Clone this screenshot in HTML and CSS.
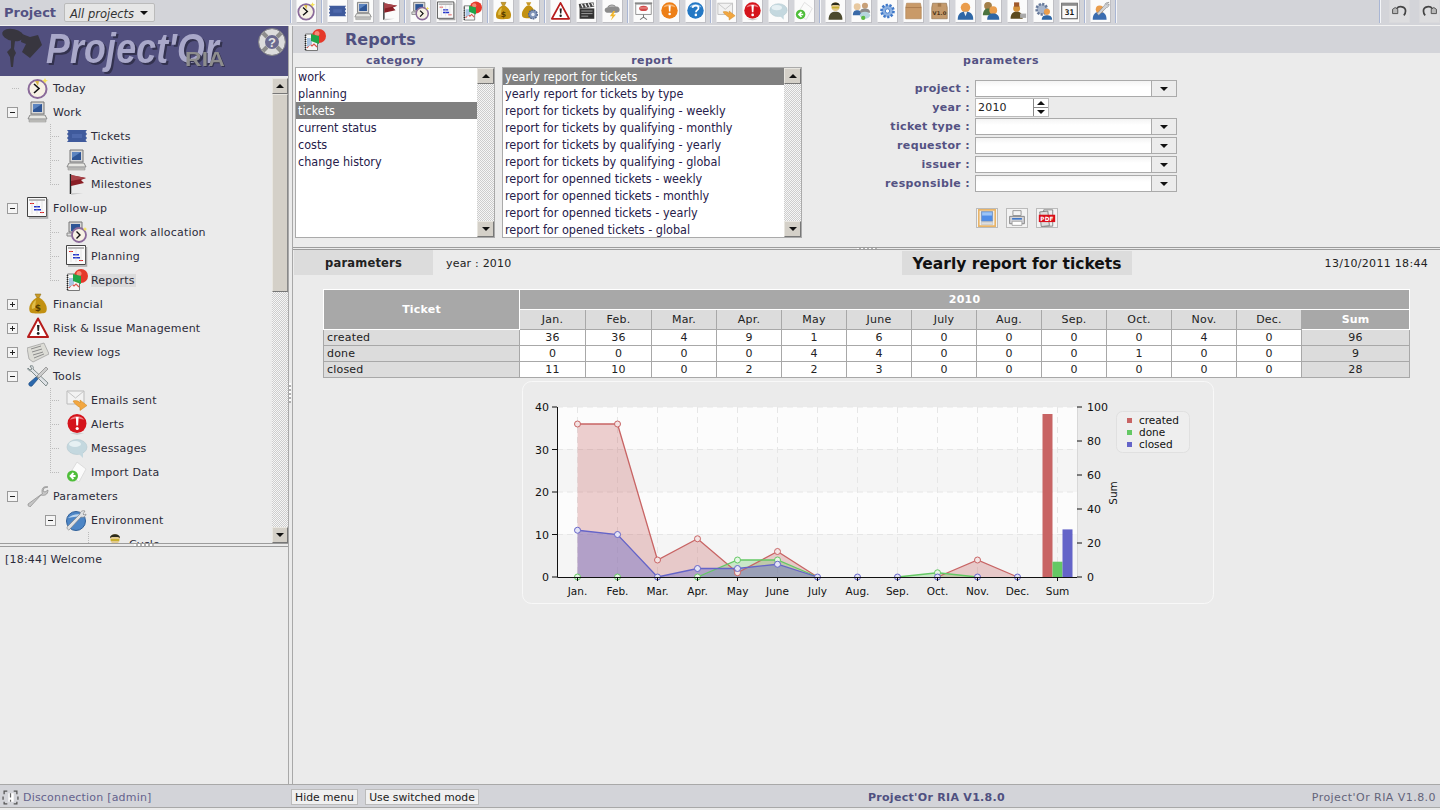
FILE: index.html
```html
<!DOCTYPE html>
<html lang="en">
<head>
<meta charset="utf-8">
<title>Project'Or RIA</title>
<link rel="stylesheet" href="styles.css">
</head>
<body>
<svg class="defs" width="0" height="0" aria-hidden="true">
<defs>
<symbol id="i-today" viewBox="0 0 22 22"><circle cx="10.5" cy="12" r="9" fill="#f6f1e4" stroke="#8a6a9a" stroke-width="2"/><path d="M7 7l5 4.5-5 4.5" fill="none" stroke="#111" stroke-width="1.6"/><path d="M8 4l3 5 1-5z" fill="#d8b84a"/><path d="M18 1l1 2 2 .5-2 1-1 2-1-2-2-1 2-.5z" fill="#f5e25a"/></symbol>
<symbol id="i-ticket" viewBox="0 0 22 22"><path d="M1 5h20l-1.500 2 1.500 2-1.500 2 1.500 2-1.500 2 1.500 2H1l1.500-2L1 13l1.500-2L1 9l1.500-2z" fill="#3f5a9c"/><path d="M6 9h10v4H6z" fill="#4d68ab"/></symbol>
<symbol id="i-activity" viewBox="0 0 22 22"><path d="M4 1h13v12H4z" fill="#d8d8d8" stroke="#777"/><path d="M6 3h9v8H6z" fill="#2e5596"/><path d="M6 3h9l-9 6z" fill="#5c84c0"/><path d="M3 14h15l2 4H1z" fill="#e6e6e2" stroke="#888"/><path d="M2 19h17v2H2z" fill="#c8c8c4" stroke="#888" stroke-width=".5"/></symbol>
<symbol id="i-flag" viewBox="0 0 22 22"><path d="M4.500 1v20" stroke="#222" stroke-width="1.500"/><path d="M5 2l15 3-5 2 3 3-13 3z" fill="#8a1f26"/><path d="M5 2l15 3-15 3z" fill="#a8444a"/><path d="M5 20h12l-12 2z" fill="#ccc"/></symbol>
<symbol id="i-alloc" viewBox="0 0 22 22"><path d="M3 1h13v10H3z" fill="#d8d8d8" stroke="#777"/><path d="M5 3h9v7H5z" fill="#2e5596"/><path d="M1 12h14v3H1z" fill="#ddd" stroke="#888"/><circle cx="13" cy="14" r="7" fill="#f6f1e4" stroke="#8a6a9a" stroke-width="1.800"/><path d="M10.500 10.500l3.500 3.500-3.500 3.500" fill="none" stroke="#111" stroke-width="1.400"/><path d="M19 6l.8 1.500 1.500.5-1.500.7-.8 1.500-.7-1.500-1.500-.7 1.500-.5z" fill="#f5e25a"/></symbol>
<symbol id="i-plan" viewBox="0 0 22 22"><path d="M.5.5h19v19H.5z" fill="#fafafa" stroke="#444"/><path d="M20.500 2v19H2" fill="none" stroke="#aaa" stroke-width="1.500"/><path d="M2 2.500h16v1H2z" fill="#777"/><path d="M3 6h4v1H3zM13 15h4v1h-4z" fill="#d22"/><path d="M7 9h6v1.500H7zM7 12h7v1.500H7z" fill="#23c"/><path d="M5 4v13M10 4v13M15 4v13" stroke="#ccc" stroke-width=".5"/></symbol>
<symbol id="i-report" viewBox="0 0 22 22"><path d="M1.500 5h12v16.500h-12z" fill="#f6f6f6" stroke="#777"/><path d="M1.500 6v15" stroke="#222" stroke-width="1.600" stroke-dasharray="1 1"/><path d="M3 19l3-4 2 2 2-2 3 3" fill="none" stroke="#d9544c" stroke-width="1.200"/><path d="M3 9l5 0v6l-5 3z" fill="#a9c6e4"/><circle cx="15" cy="7" r="7" fill="#e5392a"/><circle cx="13" cy="4.500" r="2.500" fill="#f48a76"/><path d="M7 5l8 2v8l-8-3z" fill="#1fa548"/></symbol>
<symbol id="i-bag" viewBox="0 0 22 22"><path d="M8 1h6l-2 4h-2z" fill="#c89a28" stroke="#8a6a10" stroke-width=".5"/><path d="M9 5h4c6 4 8 10 6 14-1 2-15 2-16 0-2-4 0-10 6-14z" fill="#c29112"/><path d="M9 7c-3 2-5 6-4 9l3-1z" fill="#e0bd4a"/><text x="11" y="18" class="svg-mini">$</text></symbol>
<symbol id="i-bag-gear" viewBox="0 0 22 22"><path d="M7 1h6l-2 4H9z" fill="#c89a28"/><path d="M8 5h4c5 4 7 9 5 13-1 2-13 2-14 0-2-4 0-9 5-13z" fill="#c29112"/><circle cx="15" cy="15" r="5" fill="#7f93b8" stroke="#4d628c" stroke-width="1.500" stroke-dasharray="2 1"/><circle cx="15" cy="15" r="2" fill="#e9edf5"/></symbol>
<symbol id="i-risk" viewBox="0 0 22 22"><path d="M11 1.500L21 20H1z" fill="#fff" stroke="#b71c1c" stroke-width="2" stroke-linejoin="round"/><path d="M10 8h2.500l-.5 6h-1.500z" fill="#222"/><circle cx="11.200" cy="16.500" r="1.400" fill="#222"/></symbol>
<symbol id="i-clap" viewBox="0 0 22 22"><path d="M3 8h17v12H3z" fill="#333"/><path d="M2 3l17-2 1 5-17 2z" fill="#444"/><path d="M5 3l2 4M9 2.500l2 4M13 2l2 4M17 1.500l2 4" stroke="#eee" stroke-width="1.500"/><path d="M5 11h13M5 14h13M5 17h8" stroke="#aaa"/></symbol>
<symbol id="i-storm" viewBox="0 0 22 22"><path d="M5 13c-4 0-4-6 0-6 1-4 8-5 10-1 5-1 6 7 1 7z" fill="#8c8c8c"/><path d="M6 7c2-3 6-3 8-1-3 0-6 0-8 1z" fill="#bbb"/><path d="M12 11l-4 6h3l-2 5 6-7h-3l2-4z" fill="#f2b62c"/></symbol>
<symbol id="i-meet" viewBox="0 0 22 22"><path d="M1 1h20v2H1z" fill="#888"/><path d="M2 3h18v12H2z" fill="#fdfdfd" stroke="#888"/><ellipse cx="11" cy="8" rx="5" ry="3" fill="#d24a4a"/><path d="M7 7h8v1H7z" fill="#f3b1a8"/><path d="M11 15v3M11 18l-4 3M11 18l4 3" stroke="#777" stroke-width="1.200"/></symbol>
<symbol id="i-orange" viewBox="0 0 22 22"><circle cx="11" cy="10.500" r="9.500" fill="#ed7f17"/><path d="M4 7c2-5 12-5 14 0-4-2-10-2-14 0z" fill="#f6b676"/><path d="M10 4.500h2.400l-.4 7h-1.600z" fill="#fff"/><circle cx="11.200" cy="14.500" r="1.500" fill="#fff"/></symbol>
<symbol id="i-help" viewBox="0 0 22 22"><circle cx="11" cy="10.500" r="9.500" fill="#2478c4"/><path d="M4 7c2-5 12-5 14 0-4-2-10-2-14 0z" fill="#8fc1ea"/><path d="M7.500 7.500c.5-3.500 7-3.500 7 0 0 2.500-3 2.500-3 5" fill="none" stroke="#fff" stroke-width="2"/><circle cx="11.400" cy="15.500" r="1.500" fill="#fff"/></symbol>
<symbol id="i-mail" viewBox="0 0 22 22"><path d="M1 2h17v13H1z" fill="#f2f2f2" stroke="#bbb"/><path d="M1 2l8.500 7L18 2" fill="none" stroke="#c4c4c4"/><path d="M7 12c4-1 6 0 7 2v-3l7 5.500-7 5v-3c-3-2-5-3-7-6.500z" fill="#f2a640" stroke="#c98520" stroke-width=".5"/></symbol>
<symbol id="i-alert" viewBox="0 0 22 22"><circle cx="11" cy="10.500" r="9.500" fill="#d5141c"/><path d="M4 7c2-5 12-5 14 0-4-2-10-2-14 0z" fill="#ee8085"/><path d="M9.800 4h2.800l-.5 8.500h-1.800z" fill="#fff"/><circle cx="11.200" cy="15.500" r="1.600" fill="#fff"/><path d="M4 20h14l-7 2z" fill="#ccc"/></symbol>
<symbol id="i-msg" viewBox="0 0 22 22"><ellipse cx="11" cy="10" rx="10" ry="7.500" fill="#c4d8df" stroke="#b4c8cf" stroke-width=".6"/><ellipse cx="9" cy="7" rx="6" ry="3" fill="#e6f0f3"/><path d="M12 16l5 5v-6z" fill="#c4d8df"/></symbol>
<symbol id="i-import" viewBox="0 0 22 22"><path d="M11 1l9 7-7 13L3 14z" fill="#fbfbfb" stroke="#ddd"/><circle cx="6.500" cy="15" r="5.500" fill="#4fbe3a"/><path d="M9.500 15H5m2.500-3L4.500 15l3 3" fill="none" stroke="#fff" stroke-width="1.800"/></symbol>
<symbol id="i-news" viewBox="0 0 22 22"><path d="M0 7l17-5 5 11-16 8-4-3z" fill="#dcdcd6" stroke="#999" stroke-width=".7"/><path d="M4 8l10-3M5 11l10-3M6 14l10-3M7 17l10-4" stroke="#8c8c8c"/></symbol>
<symbol id="i-tools" viewBox="0 0 22 22"><path d="M3 1c3-1 4 1 3 3l15 14-2 3L4 6C2 6 0 4 1 3l2 2 2-1z" fill="#dfe2e6" stroke="#566" stroke-width=".7"/><path d="M19 2l2 2-9 9-2-2z" fill="#ccc" stroke="#777" stroke-width=".6"/><path d="M9 12l2 2-6 7c-2 1-4-1-3-3z" fill="#2b68ad" stroke="#174578" stroke-width=".6"/></symbol>
<symbol id="i-wrench" viewBox="0 0 22 22"><path d="M21 2c-3-1-6 0-6 4 0 1 0 2 .5 2.500L1 19c0 2 1 3 2 3L14 10c3 1 7 0 7-5l-3 2-2-1 1-3z" fill="#c6c6c6" stroke="#8a8a8a" stroke-width=".7"/></symbol>
<symbol id="i-env" viewBox="0 0 22 22"><circle cx="11" cy="12" r="9.500" fill="#4d86c6" stroke="#2f5f98"/><path d="M3 9c4-4 12-5 16-2-5 0-11 1-16 2z" fill="#bcd6ef"/><path d="M20 2c-3-1-5 1-5 3l-13 13c0 2 1 3 2 3L16 8c3 1 5-1 5-3l-2 1-1-1z" fill="#dfe1e3" stroke="#7b7b7b" stroke-width=".6"/></symbol>
<symbol id="i-person" viewBox="0 0 22 22"><circle cx="11" cy="6" r="5" fill="#e2c98e"/><path d="M6 5c0-5 10-5 10 0l-2-1H8z" fill="#2a2a1c"/><path d="M7 6h8v2H7z" fill="#c8b030"/><path d="M3 21c0-7 4-9 8-9s8 2 8 9z" fill="#4c4a2e"/></symbol>
<symbol id="i-contact" viewBox="0 0 22 22"><circle cx="6" cy="6" r="4" fill="#e8c9a0"/><path d="M1 16c0-5 2-6 5-6s5 1 5 6z" fill="#3a6aa8"/><circle cx="15" cy="5" r="3.500" fill="#c8a078"/><path d="M9 13c0-4 3-5 6-5s6 1 6 5z" fill="#8c8c8c"/><ellipse cx="15" cy="16" rx="6" ry="4" fill="#b6d6de"/><circle cx="13" cy="19" r="2.500" fill="#5cbb44"/></symbol>
<symbol id="i-gear" viewBox="0 0 22 22"><circle cx="11" cy="11" r="7" fill="#8eb2e2" stroke="#3f78c8" stroke-width="3" stroke-dasharray="2.500 1.800"/><circle cx="11" cy="11" r="2.500" fill="#fff" stroke="#3f78c8"/></symbol>
<symbol id="i-box" viewBox="0 0 22 22"><path d="M3 2h16l1 5v13H2V7z" fill="#c99a68" stroke="#ad8050" stroke-width=".7"/><path d="M2 7h18" stroke="#a87a4c"/></symbol>
<symbol id="i-version" viewBox="0 0 22 22"><path d="M3 2h16l1 5v13H2V7z" fill="#c49a6c" stroke="#8b6a44" stroke-width=".7"/><path d="M9 2h4v4H9z" fill="#a47a4c"/><text x="11" y="15.500" class="svg-v">V1.0</text></symbol>
<symbol id="i-user" viewBox="0 0 22 22"><circle cx="11" cy="7" r="5.500" fill="#ea9d4c"/><path d="M2 21c0-7 4-9 9-9s9 2 9 9z" fill="#2f67a6"/><path d="M9 12h4l-2 5z" fill="#f0f0f0"/></symbol>
<symbol id="i-team" viewBox="0 0 22 22"><circle cx="7" cy="5" r="4.500" fill="#a3804a"/><path d="M1 16c0-6 3-8 6-8s6 2 6 8z" fill="#4b7440"/><circle cx="13" cy="10" r="4.500" fill="#ea9d4c"/><path d="M6 21c0-5 3-7 7-7s7 2 7 7z" fill="#2f67a6"/></symbol>
<symbol id="i-affect" viewBox="0 0 22 22"><circle cx="10" cy="8" r="4" fill="#d4923c"/><path d="M7 1h6v5H7z" fill="#a05a2c"/><path d="M3 20c0-6 3-8 7-8s7 2 7 8z" fill="#5c4a1e"/><path d="M14 14h7v5h-7z" fill="#aaa"/></symbol>
<symbol id="i-gears" viewBox="0 0 22 22"><circle cx="9" cy="9" r="6" fill="#a8b6cc" stroke="#66799a" stroke-width="3" stroke-dasharray="2.500 1.500"/><circle cx="15" cy="12" r="3.500" fill="#ea9d4c"/><path d="M9 21c0-4 3-5 6-5s6 1 6 5z" fill="#2f67a6"/></symbol>
<symbol id="i-cal" viewBox="0 0 22 22"><path d="M2 2h18v18H2z" fill="#fafafa" stroke="#555" stroke-width="1.200"/><path d="M2 2h18v3H2z" fill="#8c8c8c"/><text x="11" y="16" class="svg-cal">31</text></symbol>
<symbol id="i-wrench-user" viewBox="0 0 22 22"><path d="M2 21c0-6 3-9 8-9s8 3 8 9z" fill="#3b6db0"/><circle cx="10" cy="9" r="4.500" fill="#ea9d4c"/><path d="M21 1c-3 0-5 1-5 3L7 14l2 2 9-9c2 0 3-2 3-4l-2 1-1-1z" fill="#d0d2d6" stroke="#7b7b7b" stroke-width=".6"/></symbol>
<symbol id="i-undo" viewBox="0 0 22 22"><path d="M3 9l3-2 3 2v5H3z" fill="#b8b8b8" stroke="#444"/><path d="M8 8c2-3 10-3 10 3 0 2-1 4-2 5" fill="none" stroke="#444" stroke-width="2"/></symbol>
<symbol id="i-redo" viewBox="0 0 22 22"><path d="M13 9l3-2 3 2v5h-6z" fill="#b8b8b8" stroke="#444"/><path d="M14 8c-2-3-10-3-10 3 0 2 1 4 2 5" fill="none" stroke="#444" stroke-width="2"/></symbol>
<symbol id="i-screen" viewBox="0 0 22 22"><path d="M1 1h20v20H1z" fill="none" stroke="#e8b468" stroke-width="2"/><path d="M4 3h14v12H4z" fill="#4f8de8" stroke="#888" stroke-width=".6"/><path d="M5 4h12v4H5z" fill="#9cc4f6"/><path d="M4 16h14v3H4z" fill="#ddd" stroke="#aaa" stroke-width=".5"/></symbol>
<symbol id="i-print" viewBox="0 0 22 22"><path d="M6 2h10v6H6z" fill="#f4f4f4" stroke="#888"/><path d="M2 9h18v9H2z" fill="#d4d4d8" stroke="#777"/><path d="M5 11h12v2H5z" fill="#3f78c8"/><path d="M5 15h12v5H5z" fill="#fff" stroke="#999"/></symbol>
<symbol id="i-pdf" viewBox="0 0 22 22"><path d="M7 1h11v20H7z" fill="#eee" stroke="#777"/><path d="M3 3h10v18H3z" fill="#ddd" stroke="#777" transform="rotate(-6 8 12)"/><path d="M1 7h20v9H1z" fill="#d90f1a"/><text x="11" y="14.500" class="svg-pdf">PDF</text></symbol>
<symbol id="i-lifebuoy" viewBox="0 0 28 28"><circle cx="14" cy="14" r="10" fill="#6b6a8f" stroke="#dcdcdc" stroke-width="6"/><circle cx="14" cy="14" r="13.500" fill="none" stroke="#8a8a8a" stroke-width="1"/><path d="M5 5l4 4M23 5l-4 4M5 23l4-4M23 23l-4-4" stroke="#8c8c8c" stroke-width="4"/><text x="14" y="18.500" class="svg-help">?</text></symbol>
<symbol id="i-power" viewBox="0 0 16 16"><path d="M5 2H2v3M1 7v3M2 12v2h3M11 2h3v3M15 7v3M14 12v2h-3" fill="none" stroke="#555" stroke-width="1.200"/><path d="M6 4h5v8H6z" fill="#fff"/><path d="M8 4v4M8 10v2" stroke="#666" stroke-width="1.200"/></symbol>
</defs>
</svg>

<header class="topbar">
  <div class="project-box">
    <span class="project-label">Project</span>
    <span class="project-select"><span class="project-value">All projects</span><span class="arrow"></span></span>
  </div>
  <nav class="toolbar">
    <span class="sep"></span>
    <span class="tb"><svg class="tb-ic"><use href="#i-today"/></svg></span>
    <span class="sep"></span>
    <span class="tb"><svg class="tb-ic"><use href="#i-ticket"/></svg></span>
    <span class="tb"><svg class="tb-ic"><use href="#i-activity"/></svg></span>
    <span class="tb"><svg class="tb-ic"><use href="#i-flag"/></svg></span>
    <span class="sep"></span>
    <span class="tb"><svg class="tb-ic"><use href="#i-alloc"/></svg></span>
    <span class="tb"><svg class="tb-ic"><use href="#i-plan"/></svg></span>
    <span class="tb"><svg class="tb-ic"><use href="#i-report"/></svg></span>
    <span class="sep"></span>
    <span class="tb"><svg class="tb-ic"><use href="#i-bag"/></svg></span>
    <span class="tb"><svg class="tb-ic"><use href="#i-bag-gear"/></svg></span>
    <span class="sep"></span>
    <span class="tb"><svg class="tb-ic"><use href="#i-risk"/></svg></span>
    <span class="tb"><svg class="tb-ic"><use href="#i-clap"/></svg></span>
    <span class="tb"><svg class="tb-ic"><use href="#i-storm"/></svg></span>
    <span class="sep"></span>
    <span class="tb"><svg class="tb-ic"><use href="#i-meet"/></svg></span>
    <span class="tb"><svg class="tb-ic"><use href="#i-orange"/></svg></span>
    <span class="tb"><svg class="tb-ic"><use href="#i-help"/></svg></span>
    <span class="sep"></span>
    <span class="tb"><svg class="tb-ic"><use href="#i-mail"/></svg></span>
    <span class="tb"><svg class="tb-ic"><use href="#i-alert"/></svg></span>
    <span class="tb"><svg class="tb-ic"><use href="#i-msg"/></svg></span>
    <span class="tb"><svg class="tb-ic"><use href="#i-import"/></svg></span>
    <span class="sep"></span>
    <span class="tb"><svg class="tb-ic"><use href="#i-person"/></svg></span>
    <span class="tb"><svg class="tb-ic"><use href="#i-contact"/></svg></span>
    <span class="tb"><svg class="tb-ic"><use href="#i-gear"/></svg></span>
    <span class="tb"><svg class="tb-ic"><use href="#i-box"/></svg></span>
    <span class="tb"><svg class="tb-ic"><use href="#i-version"/></svg></span>
    <span class="tb"><svg class="tb-ic"><use href="#i-user"/></svg></span>
    <span class="tb"><svg class="tb-ic"><use href="#i-team"/></svg></span>
    <span class="tb"><svg class="tb-ic"><use href="#i-affect"/></svg></span>
    <span class="tb"><svg class="tb-ic"><use href="#i-gears"/></svg></span>
    <span class="tb"><svg class="tb-ic"><use href="#i-cal"/></svg></span>
    <span class="sep"></span>
    <span class="tb"><svg class="tb-ic"><use href="#i-wrench-user"/></svg></span>
    <span class="sep"></span>
    <span class="toolbar-spacer"></span>
    <span class="sep"></span>
    <span class="tb tb-grey tb-wide"><svg class="tb-ic"><use href="#i-undo"/></svg></span>
    <span class="tb tb-grey tb-wide"><svg class="tb-ic"><use href="#i-redo"/></svg></span>
  </nav>
</header>

<div class="main">
  <aside class="left">
    <div class="logo">
      <svg class="logo-svg" viewBox="0 0 288 50" width="288" height="50">
        <g class="logo-cam">
          <ellipse cx="13" cy="9" rx="11" ry="6" transform="rotate(12 13 9)"/>
          <path d="M22 8l8 3 8-2 4 10-12 13-8-6 4-8-5-2z"/>
          <path d="M11 14l4 1-1 8 2 4-2 4-1 10h-2l-1-10-3-5 4-4z"/>
        </g>
        <text x="46" y="37" textLength="173" lengthAdjust="spacingAndGlyphs" class="logo-main">Project'Or</text>
        <text x="185" y="40" textLength="40" lengthAdjust="spacingAndGlyphs" class="logo-ria">RIA</text>
        <svg x="258" y="2" width="28" height="28"><use href="#i-lifebuoy"/></svg>
      </svg>
    </div>
    <div class="tree-wrap">
      <div class="tree">
        <div class="row root"><span class="dash-only"></span><svg class="ic"><use href="#i-today"/></svg><span class="lbl">Today</span></div>
        <div class="row root"><span class="tg minus"></span><svg class="ic"><use href="#i-activity"/></svg><span class="lbl">Work</span></div>
        <div class="kids">
          <div class="row kid"><span class="stub"></span><svg class="ic"><use href="#i-ticket"/></svg><span class="lbl">Tickets</span></div>
          <div class="row kid"><span class="stub"></span><svg class="ic"><use href="#i-activity"/></svg><span class="lbl">Activities</span></div>
          <div class="row kid"><span class="stub"></span><svg class="ic"><use href="#i-flag"/></svg><span class="lbl">Milestones</span></div>
        </div>
        <div class="row root"><span class="tg minus"></span><svg class="ic"><use href="#i-plan"/></svg><span class="lbl">Follow-up</span></div>
        <div class="kids">
          <div class="row kid"><span class="stub"></span><svg class="ic"><use href="#i-alloc"/></svg><span class="lbl">Real work allocation</span></div>
          <div class="row kid"><span class="stub"></span><svg class="ic"><use href="#i-plan"/></svg><span class="lbl">Planning</span></div>
          <div class="row kid"><span class="stub"></span><svg class="ic"><use href="#i-report"/></svg><span class="lbl lbl-on">Reports</span></div>
        </div>
        <div class="row root"><span class="tg plus"></span><svg class="ic"><use href="#i-bag"/></svg><span class="lbl">Financial</span></div>
        <div class="row root"><span class="tg plus"></span><svg class="ic"><use href="#i-risk"/></svg><span class="lbl">Risk &amp; Issue Management</span></div>
        <div class="row root"><span class="tg plus"></span><svg class="ic"><use href="#i-news"/></svg><span class="lbl">Review logs</span></div>
        <div class="row root"><span class="tg minus"></span><svg class="ic"><use href="#i-tools"/></svg><span class="lbl">Tools</span></div>
        <div class="kids">
          <div class="row kid"><span class="stub"></span><svg class="ic"><use href="#i-mail"/></svg><span class="lbl">Emails sent</span></div>
          <div class="row kid"><span class="stub"></span><svg class="ic"><use href="#i-alert"/></svg><span class="lbl">Alerts</span></div>
          <div class="row kid"><span class="stub"></span><svg class="ic"><use href="#i-msg"/></svg><span class="lbl">Messages</span></div>
          <div class="row kid"><span class="stub"></span><svg class="ic"><use href="#i-import"/></svg><span class="lbl">Import Data</span></div>
        </div>
        <div class="row root"><span class="tg minus"></span><svg class="ic"><use href="#i-wrench"/></svg><span class="lbl">Parameters</span></div>
        <div class="row sub"><span class="tg minus"></span><svg class="ic"><use href="#i-env"/></svg><span class="lbl">Environment</span></div>
        <div class="kids kids-2">
          <div class="row kid"><span class="stub"></span><svg class="ic"><use href="#i-person"/></svg><span class="lbl">Cycle</span></div>
        </div>
      </div>
      <div class="scroll scroll-tree">
        <span class="sbtn up"></span>
        <span class="thumb"></span>
        <span class="track"></span>
        <span class="sbtn down"></span>
      </div>
    </div>
    <div class="hsplit"><span class="grip"></span></div>
    <div class="log">[18:44] Welcome</div>
  </aside>
  <div class="vsplit"><span class="vgrip"></span></div>
  <section class="right">
    <div class="title-bar">
      <svg class="title-ic"><use href="#i-report"/></svg>
      <h1 class="title">Reports</h1>
    </div>
    <div class="selector">
      <div class="col col-cat">
        <div class="col-head">category</div>
        <div class="list">
          <ul class="items">
            <li>work</li><li>planning</li><li class="on">tickets</li><li>current status</li><li>costs</li><li>change history</li>
          </ul>
          <div class="scroll"><span class="sbtn up"></span><span class="track"></span><span class="sbtn down"></span></div>
        </div>
      </div>
      <div class="col col-rep">
        <div class="col-head">report</div>
        <div class="list">
          <ul class="items">
            <li class="on">yearly report for tickets</li>
            <li>yearly report for tickets by type</li>
            <li>report for tickets by qualifying - weekly</li>
            <li>report for tickets by qualifying - monthly</li>
            <li>report for tickets by qualifying - yearly</li>
            <li>report for tickets by qualifying - global</li>
            <li>report for openned tickets - weekly</li>
            <li>report for openned tickets - monthly</li>
            <li>report for openned tickets - yearly</li>
            <li>report for opened tickets - global</li>
          </ul>
          <div class="scroll"><span class="sbtn up"></span><span class="track"></span><span class="sbtn down"></span></div>
        </div>
      </div>
      <div class="col col-par">
        <div class="col-head">parameters</div>
        <div class="form">
          <label class="f-lbl">project :</label><span class="combo"><span class="combo-in"></span><span class="combo-btn"><span class="arrow"></span></span></span>
          <label class="f-lbl">year :</label><span class="spin"><span class="spin-val">2010</span><span class="spin-btns"><span class="spin-up"></span><span class="spin-down"></span></span></span>
          <label class="f-lbl">ticket type :</label><span class="combo"><span class="combo-in"></span><span class="combo-btn"><span class="arrow"></span></span></span>
          <label class="f-lbl">requestor :</label><span class="combo"><span class="combo-in"></span><span class="combo-btn"><span class="arrow"></span></span></span>
          <label class="f-lbl">issuer :</label><span class="combo"><span class="combo-in"></span><span class="combo-btn"><span class="arrow"></span></span></span>
          <label class="f-lbl">responsible :</label><span class="combo"><span class="combo-in"></span><span class="combo-btn"><span class="arrow"></span></span></span>
        </div>
        <div class="actions">
          <span class="act"><svg class="act-ic"><use href="#i-screen"/></svg></span>
          <span class="act"><svg class="act-ic"><use href="#i-print"/></svg></span>
          <span class="act"><svg class="act-ic"><use href="#i-pdf"/></svg></span>
        </div>
      </div>
    </div>
    <div class="hsplit hsplit-right"><span class="grip"></span></div>
    <div class="report">
      <div class="rep-head">
        <div class="rep-tab">parameters</div>
        <div class="rep-year">year : 2010</div>
        <div class="rep-title">Yearly report for tickets</div>
        <div class="rep-date">13/10/2011 18:44</div>
      </div>
      <table class="grid">
        <colgroup>
          <col class="c-name"><col class="c-w"><col class="c-w"><col class="c-n"><col class="c-n"><col class="c-n"><col class="c-n"><col class="c-n"><col class="c-n"><col class="c-n"><col class="c-n"><col class="c-n"><col class="c-n"><col class="c-sum">
        </colgroup>
        <thead>
          <tr class="tr-year"><th class="th-dark" rowspan="2">Ticket</th><th class="th-dark th-year" colspan="13">2010</th></tr>
          <tr class="tr-month"><th>Jan.</th><th>Feb.</th><th>Mar.</th><th>Apr.</th><th>May</th><th>June</th><th>July</th><th>Aug.</th><th>Sep.</th><th>Oct.</th><th>Nov.</th><th>Dec.</th><th class="th-dark">Sum</th></tr>
        </thead>
        <tbody>
          <tr><td class="td-name">created</td><td>36</td><td>36</td><td>4</td><td>9</td><td>1</td><td>6</td><td>0</td><td>0</td><td>0</td><td>0</td><td>4</td><td>0</td><td class="td-sum">96</td></tr>
          <tr><td class="td-name">done</td><td>0</td><td>0</td><td>0</td><td>0</td><td>4</td><td>4</td><td>0</td><td>0</td><td>0</td><td>1</td><td>0</td><td>0</td><td class="td-sum">9</td></tr>
          <tr><td class="td-name">closed</td><td>11</td><td>10</td><td>0</td><td>2</td><td>2</td><td>3</td><td>0</td><td>0</td><td>0</td><td>0</td><td>0</td><td>0</td><td class="td-sum">28</td></tr>
        </tbody>
      </table>
      <svg class="chart" viewBox="522 381 692 223" width="692" height="223">
        <rect x="522.500" y="381.500" width="691" height="222" rx="9" class="c-frame"/>
        <rect x="557" y="407" width="520" height="42.500" class="b-a"/>
        <rect x="557" y="449.500" width="520" height="42.500" class="b-b"/>
        <rect x="557" y="492" width="520" height="42.500" class="b-a"/>
        <rect x="557" y="534.500" width="520" height="42.500" class="b-b"/>
        <path d="M557 407h520M557 449.500h520M557 492h520M557 534.500h520" class="grid-l"/>
        <path d="M577.500 407v170M617.500 407v170M657.500 407v170M697.500 407v170M737.500 407v170M777.500 407v170M817.500 407v170M857.500 407v170M897.500 407v170M937.500 407v170M977.500 407v170M1017.500 407v170M1057.500 407v170" class="grid-l"/>
        <path d="M577.500 577V424H617.500L657.500 560L697.500 538.750L737.500 572.750L777.500 551.500L817.500 577ZM937.500 577L977.500 560L1017.500 577Z" class="a-red"/>
        <path d="M697.500 577L737.500 560H777.500L817.500 577ZM897.500 577L937.500 572.750L977.500 577Z" class="a-green"/>
        <path d="M577.500 577V530.250L617.500 534.500L657.500 577L697.500 568.500H737.500L777.500 564.250L817.500 577Z" class="a-blue"/>
        <path d="M577.500 424H617.500L657.500 560L697.500 538.750L737.500 572.750L777.500 551.500L817.500 577M937.500 577L977.500 560L1017.500 577" class="l-red"/>
        <path d="M697.500 577L737.500 560H777.500L817.500 577M897.500 577L937.500 572.750L977.500 577" class="l-green"/>
        <path d="M577.500 530.250L617.500 534.500L657.500 577L697.500 568.500H737.500L777.500 564.250L817.500 577" class="l-blue"/>
        <g class="d-red">
          <circle cx="577.500" cy="424" r="3"/><circle cx="617.500" cy="424" r="3"/><circle cx="657.500" cy="560" r="3"/><circle cx="697.500" cy="538.750" r="3"/><circle cx="737.500" cy="572.750" r="3"/><circle cx="777.500" cy="551.500" r="3"/><circle cx="977.500" cy="560" r="3"/>
        </g>
        <g class="d-green">
          <circle cx="577.500" cy="577" r="3"/><circle cx="617.500" cy="577" r="3"/><circle cx="697.500" cy="577" r="3"/><circle cx="737.500" cy="560" r="3"/><circle cx="777.500" cy="560" r="3"/><circle cx="937.500" cy="572.750" r="3"/>
        </g>
        <g class="d-blue">
          <circle cx="577.500" cy="530.250" r="3"/><circle cx="617.500" cy="534.500" r="3"/><circle cx="657.500" cy="577" r="3"/><circle cx="697.500" cy="568.500" r="3"/><circle cx="737.500" cy="568.500" r="3"/><circle cx="777.500" cy="564.250" r="3"/><circle cx="817.500" cy="577" r="3"/><circle cx="857.500" cy="577" r="3"/><circle cx="897.500" cy="577" r="3"/><circle cx="937.500" cy="577" r="3"/><circle cx="977.500" cy="577" r="3"/><circle cx="1017.500" cy="577" r="3"/>
        </g>
        <rect x="1042.500" y="414" width="10" height="163" class="bar-r"/>
        <rect x="1052.500" y="561.700" width="10" height="15.300" class="bar-g"/>
        <rect x="1062.500" y="529.400" width="10" height="47.600" class="bar-b"/>
        <path d="M557.500 407V577.500H1077" class="axis"/>
        <path d="M552 407h5M552 449.500h5M552 492h5M552 534.500h5M552 577h5" class="axis"/>
        <path d="M577.500 577v4M617.500 577v4M657.500 577v4M697.500 577v4M737.500 577v4M777.500 577v4M817.500 577v4M857.500 577v4M897.500 577v4M937.500 577v4M977.500 577v4M1017.500 577v4M1057.500 577v4" class="axis"/>
        <path d="M1077.500 407V577" class="axis-r"/>
        <path d="M1077 407h5M1077 441h5M1077 475h5M1077 509h5M1077 543h5M1077 577h5" class="axis"/>
        <g class="t-l">
          <text x="549" y="411">40</text><text x="549" y="453.500">30</text><text x="549" y="496">20</text><text x="549" y="538.500">10</text><text x="549" y="581">0</text>
        </g>
        <g class="t-r">
          <text x="1087" y="411">100</text><text x="1087" y="445">80</text><text x="1087" y="479">60</text><text x="1087" y="513">40</text><text x="1087" y="547">20</text><text x="1087" y="581">0</text>
        </g>
        <g class="t-c">
          <text x="577.500" y="595">Jan.</text><text x="617.500" y="595">Feb.</text><text x="657.500" y="595">Mar.</text><text x="697.500" y="595">Apr.</text><text x="737.500" y="595">May</text><text x="777.500" y="595">June</text><text x="817.500" y="595">July</text><text x="857.500" y="595">Aug.</text><text x="897.500" y="595">Sep.</text><text x="937.500" y="595">Oct.</text><text x="977.500" y="595">Nov.</text><text x="1017.500" y="595">Dec.</text><text x="1057.500" y="595">Sum</text>
        </g>
        <text class="t-sum" transform="translate(1117 493) rotate(-90)">Sum</text>
        <rect x="1116.500" y="411.500" width="73" height="41" rx="6" class="legend"/>
        <rect x="1127" y="418" width="5" height="5" class="bar-r"/>
        <rect x="1127" y="430" width="5" height="5" class="bar-g"/>
        <rect x="1127" y="442" width="5" height="5" class="bar-b"/>
        <g class="t-leg">
          <text x="1139" y="424">created</text><text x="1139" y="436">done</text><text x="1139" y="448">closed</text>
        </g>
      </svg>
    </div>
  </section>
</div>

<footer class="footer">
  <div class="foot-left"><svg class="foot-ic"><use href="#i-power"/></svg><span class="foot-link">Disconnection [admin]</span></div>
  <button class="foot-btn foot-btn-1" type="button">Hide menu</button>
  <button class="foot-btn foot-btn-2" type="button">Use switched mode</button>
  <div class="foot-center">Project'Or RIA V1.8.0</div>
  <div class="foot-right">Project'Or RIA V1.8.0</div>
</footer>
</body>
</html>
```
FILE: styles.css
```css
* { box-sizing: border-box; }
html, body { margin: 0; padding: 0; height: 810px; overflow: hidden; }
body {
  width: 1440px; display: flex; flex-direction: column;
  font-family: "DejaVu Sans", Verdana, sans-serif; font-size: 11px; letter-spacing: .2px; color: #222; background: #ebebeb;
}
.defs { position: absolute; }
.svg-mini { font: bold 9px "DejaVu Sans", sans-serif; fill: #5a3f00; text-anchor: middle; }
.svg-v { font: bold 6px "DejaVu Sans", sans-serif; fill: #4a3418; text-anchor: middle; }
.svg-cal { font: bold 9px "DejaVu Sans Mono", monospace; fill: #111; text-anchor: middle; }
.svg-pdf { font: bold 7px "DejaVu Sans", sans-serif; fill: #fff; text-anchor: middle; }
.svg-help { font: bold 13px "Liberation Sans", sans-serif; fill: #e4e4e4; text-anchor: middle; }

/* top bar */
.topbar { height: 26px; flex: none; display: flex; background: #d3d4d9; border-bottom: 1px solid #f2f2f2; }
.project-box { width: 291px; flex: none; display: flex; align-items: flex-start; }
.project-label { margin: 5px 0 0 4px; width: 60px; font-weight: bold; font-size: 13px; line-height: 16px; letter-spacing: 0; color: #545283; }
.project-select {
  margin-top: 3px; width: 91px; height: 19px; display: flex; align-items: center; justify-content: space-between;
  padding: 0 6px 0 5px; background: #e6e6e6; border: 1px solid #bbb; border-radius: 2px;
}
.project-value { padding-top: 2px; font-style: italic; font-size: 11.500px; letter-spacing: 0; color: #333; }
.arrow { display: block; width: 0; height: 0; border: 4px solid transparent; border-top: 4px solid #111; border-bottom: 0; }
.toolbar { flex: 1; display: flex; gap: 5px; }
.sep { width: 2px; height: 23px; margin: 0 -1px; flex: none; background: linear-gradient(to right, #a9b6d4 0 1px, #f4f5f8 1px); }
.tb {
  width: 21px; height: 23px; flex: none; display: flex; align-items: center; justify-content: center;
  background: #fbfbfb; border: 1px solid #e8e8ea; border-right-color: #bfbfc4; border-bottom-color: #bfbfc4; border-top: 0;
}
.tb-ic { width: 20px; height: 20px; display: block; }
.tb-grey { background: #dddddf; border-color: #d9d9dc; }
.tb-wide { margin-left: 4px; }
.toolbar-spacer { flex: 1; }

/* main */
.main { flex: 1; min-height: 0; display: flex; }
.left { width: 289px; flex: none; display: flex; flex-direction: column; border-right: 1px solid #a8a8a8; }
.logo { height: 50px; flex: none; background: #514f7e; }
.logo-svg { display: block; }
.logo-cam { fill: #38363f; }
.logo-main { font: italic bold 42px "Liberation Sans", sans-serif; fill: #a9a8c9; filter: drop-shadow(2px 2px 0 #33324f); }
.logo-ria { font: bold 21px "Liberation Sans", sans-serif; fill: #8d8d8d; filter: drop-shadow(1px 1px 0 #33324f); }
.tree-wrap { height: 467px; flex: none; display: flex; overflow: hidden; }
.tree { flex: 1; min-width: 0; overflow: hidden; }
.row { height: 24px; display: flex; align-items: center; }
.root { padding-left: 7px; }
.sub { padding-left: 45px; }
.tg {
  width: 11px; height: 11px; flex: none; margin-right: 9px; border: 1px solid #9a9a9a; background-color: #f5f5f5;
  background-repeat: no-repeat;
}
.minus { background-image: linear-gradient(#222, #222); background-size: 5px 1px; background-position: center; }
.plus { background-image: linear-gradient(#222, #222), linear-gradient(#222, #222); background-size: 5px 1px, 1px 5px; background-position: center, center; }
.dash-only {
  width: 8px; height: 1px; flex: none; margin-right: 7px; margin-left: 5px;
  background: repeating-linear-gradient(to right, #bbb 0 1px, transparent 1px 2px);
}
.ic { width: 22px; height: 22px; flex: none; display: block; }
.lbl { margin-left: 4px; padding: 0 1px 0 0; line-height: 13px; color: #2b2b3a; white-space: nowrap; }
.lbl-on { background: #dcdcdc; }
.kids { margin-left: 50px; }
.kids-2 { margin-left: 88px; }
.kid .ic { margin-left: 7px; }
.kid .lbl { margin-left: 3px; }
.stub {
  width: 9px; align-self: stretch; flex: none;
  background-image: repeating-linear-gradient(to bottom, #bbb 0 1px, transparent 1px 2px), repeating-linear-gradient(to right, #bbb 0 1px, transparent 1px 2px);
  background-size: 1px 100%, 100% 1px; background-position: 0 0, 0 50%; background-repeat: no-repeat;
}
.kid:last-child .stub { background-size: 1px 50%, 100% 1px; }

.scroll { width: 17px; flex: none; display: flex; flex-direction: column; }
.scroll-tree { width: 16px; margin-top: 2px; }
.sbtn { height: 16px; flex: none; display: flex; align-items: center; justify-content: center; background: #d4d0c8; border: 1px solid #e8e6e0; border-right-color: #777; border-bottom-color: #777; }
.sbtn::before { content: ""; display: block; border: 4px solid transparent; }
.up::before { border-bottom: 4px solid #111; border-top: 0; }
.down::before { border-top: 4px solid #111; border-bottom: 0; }
.thumb { height: 198px; flex: none; background: #d4d0c8; border: 1px solid #e8e6e0; border-right-color: #888; border-bottom-color: #777; }
.track { flex: 1; background: repeating-conic-gradient(#cdcdcd 0 25%, #f6f6f6 0 50%) 0 0 / 2px 2px; }

.hsplit { height: 4px; flex: none; display: flex; justify-content: center; border-top: 1px solid #9c9c9c; border-bottom: 1px solid #9c9c9c; background: #ebebeb; }
.grip { width: 20px; height: 2px; background: repeating-linear-gradient(to right, #fff 0 2px, #b0b0b0 2px 4px); }
.log { flex: 1; padding: 6px 5px; line-height: 14px; color: #2b2b3a; }
.vsplit { width: 3px; flex: none; display: flex; align-items: center; padding-bottom: 0; }
.vgrip { width: 2px; height: 20px; margin: -25px 0 0 0; background: repeating-linear-gradient(to bottom, #fff 0 2px, #b0b0b0 2px 4px); }

/* right */
.right { flex: 1; min-width: 0; display: flex; flex-direction: column; border-left: 1px solid #a8a8a8; }
.title-bar { height: 27px; flex: none; display: flex; align-items: center; background: #d3d4d9; }
.title-ic { width: 22px; height: 22px; margin-left: 11px; display: block; }
.title { margin: 0 0 0 19px; font-size: 16px; font-weight: bold; line-height: 20px; letter-spacing: 0; color: #4f5080; }
.selector { height: 194px; flex: none; display: flex; gap: 7px; padding-left: 2px; }
.col-cat { width: 200px; flex: none; }
.col-rep { width: 300px; flex: none; }
.col-par { width: 384px; flex: none; }
.col-head { height: 14px; font-weight: bold; font-size: 11px; line-height: 15px; letter-spacing: .4px; text-align: center; color: #545283; }
.list { height: 171px; display: flex; background: #fff; border: 1px solid #aaa; }
.items {
  flex: 1; min-width: 0; margin: 0; padding: 0; list-style: none; letter-spacing: 0;
  font-family: "DejaVu Sans Condensed", "DejaVu Sans", sans-serif; font-stretch: condensed; font-size: 12.500px; color: #26204a;
}
.items li { height: 17px; padding-left: 2px; line-height: 18px; white-space: nowrap; }
.items .on { background: #808080; color: #fff; }
.form { margin-top: 13px; display: grid; grid-template-columns: 161px 202px; column-gap: 5px; grid-auto-rows: 19px; }
.f-lbl { text-align: right; font-weight: bold; font-size: 11px; line-height: 17px; letter-spacing: .35px; color: #545283; }
.combo { height: 17px; display: flex; border: 1px solid #aaa; background: linear-gradient(#f4f4f4, #fff 40%); }
.combo-in { flex: 1; }
.combo-btn { width: 25px; flex: none; display: flex; align-items: center; justify-content: center; background: #ececec; border-left: 1px solid #aaa; }
.spin { width: 74px; height: 19px; margin-top: -1px; display: flex; align-items: center; background: #fff; border: 1px solid #bbb; }
.spin-val { flex: 1; padding-left: 2px; font-size: 11px; }
.spin-btns { width: 15px; height: 17px; flex: none; display: flex; flex-direction: column; border-left: 1px solid #888; }
.spin-up, .spin-down { flex: 1; display: flex; align-items: center; justify-content: center; }
.spin-up { border-bottom: 1px solid #888; }
.spin-up::before { content: ""; border: 4px solid transparent; border-bottom: 4px solid #111; border-top: 0; }
.spin-down::before { content: ""; border: 4px solid transparent; border-top: 4px solid #111; border-bottom: 0; }
.actions { margin: 14px 0 0 167px; display: flex; gap: 8px; }
.act { width: 22px; height: 20px; display: flex; align-items: center; justify-content: center; background: #f3f3f3; border: 1px solid #bbb; }
.act-ic { width: 20px; height: 18px; display: block; }
.hsplit-right { height: 3px; }
.hsplit-right .grip { height: 1px; }

.report { flex: 1; min-height: 0; display: flex; flex-direction: column; }
.rep-head { height: 25px; flex: none; display: flex; align-items: center; }
.rep-tab { width: 139px; height: 25px; margin-left: 1px; flex: none; text-align: center; font-weight: bold; font-size: 11.500px; line-height: 27px; color: #222; background: #dcdcdc; }
.rep-year { width: 469px; padding-top: 2px; flex: none; padding-left: 13px; }
.rep-title { width: 230px; height: 24px; margin-top: 1px; flex: none; text-align: center; font-size: 15.500px; font-weight: bold; line-height: 26px; letter-spacing: 0; color: #111; background: #dcdcdc; }
.rep-date { margin-left: auto; padding: 2px 12px 0 0; letter-spacing: .3px; }

.grid { margin: 14px 0 0 30px; width: 1086px; table-layout: fixed; border-collapse: collapse; }
.c-name { width: 196px; }
.c-w { width: 66px; }
.c-n { width: 65px; }
.c-sum { width: 108px; }
.grid th, .grid td { padding: 0; height: 16px; line-height: 14px; font-size: 11px; text-align: center; border: 1px solid #a8a8a8; font-weight: normal; }
.grid td { background: #fff; }
.tr-year th, .tr-month th { height: 20px; }
.grid thead th { background: #dcdcdc; border-color: #a8a8a8; }
.grid thead .th-dark { background: #a8a8a8; color: #fff; font-weight: bold; border-color: #fff; }
.grid .td-name { background: #dcdcdc; text-align: left; padding-left: 3px; }
.grid .td-sum { background: #dcdcdc; }
.chart { display: block; margin: 3px 0 0 229px; flex: none; letter-spacing: 0; }
.c-frame { fill: none; stroke: #f8f8f8; }
.b-a { fill: #fcfcfc; }
.b-b { fill: #f5f5f5; }
.grid-l { fill: none; stroke: #e6e6e6; stroke-dasharray: 6 4; }
.a-red { fill: rgba(200, 100, 100, .3); }
.a-green { fill: rgba(100, 200, 100, .3); }
.a-blue { fill: rgba(100, 100, 200, .4); }
.l-red { fill: none; stroke: #c86464; stroke-width: 1.300; }
.l-green { fill: none; stroke: #64c864; stroke-width: 1.300; }
.l-blue { fill: none; stroke: #6464c8; stroke-width: 1.300; }
.d-red circle { fill: #f4e4e4; stroke: #c86464; }
.d-green circle { fill: #e6f6e6; stroke: #64c864; }
.d-blue circle { fill: #e4e4f6; stroke: #6464c8; }
.bar-r { fill: #c86464; }
.bar-g { fill: #64c864; }
.bar-b { fill: #6464c8; }
.axis { fill: none; stroke: #111; }
.axis-r { fill: none; stroke: #d8d8d8; }
.t-l text { font-size: 11px; fill: #111; text-anchor: end; }
.t-r text { font-size: 11px; fill: #111; }
.t-c text { font-size: 10.500px; fill: #111; text-anchor: middle; }
.t-sum { font-size: 10.500px; fill: #111; text-anchor: middle; }
.legend { fill: #eeeeee; stroke: #e0e0e0; }
.t-leg text { font-size: 10.500px; fill: #111; }

/* footer */
.footer { height: 24px; margin-bottom: 2px; flex: none; display: flex; align-items: center; background: #d3d4d9; border-top: 1px solid #a8a8a8; border-bottom: 1px solid #a8a8a8; }
.foot-left { width: 291px; margin-top: 2px; flex: none; display: flex; align-items: center; gap: 4px; padding-left: 2px; }
.foot-ic { width: 17px; height: 17px; display: block; }
.foot-link { color: #64628c; }
.foot-btn { height: 16px; margin: 2px 0 0; padding: 0; flex: none; font: 10.800px "DejaVu Sans", sans-serif; color: #222; background: #f0f0f0; border: 1px solid #bbb; border-radius: 0; }
.foot-btn-1 { width: 67px; }
.foot-btn-2 { width: 114px; margin-left: 7px; }
.foot-center { width: 526px; margin-top: 2px; flex: none; font-weight: bold; text-align: right; letter-spacing: .3px; color: #4f5080; }
.foot-right { margin-left: auto; margin-top: 2px; padding-right: 4px; letter-spacing: .45px; color: #64647a; }
```
